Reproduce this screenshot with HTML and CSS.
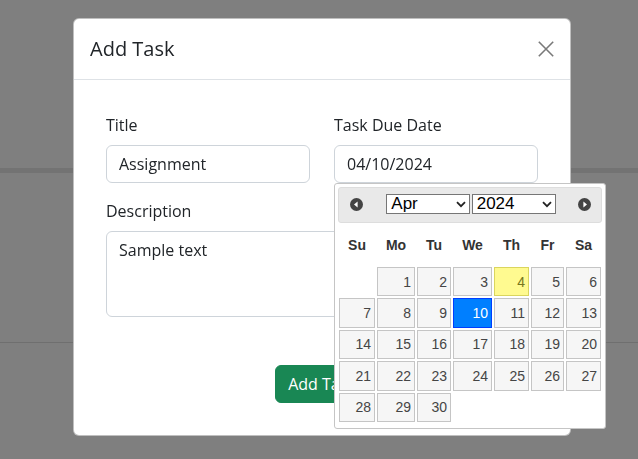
FILE: index.html
```html
<!DOCTYPE html>
<html lang="en">
<head>
<meta charset="utf-8">
<title>Add Task</title>
<link rel="stylesheet" href="styles.css">
</head>
<body>
<div class="page">
  <div class="page-top"></div>
  <div class="page-mid"></div>
</div>
<div class="backdrop"></div>

<div class="modal">
  <div class="modal-header">
    <h5 class="modal-title">Add Task</h5>
    <button class="btn-close" type="button" aria-label="Close">
      <svg width="16" height="16" viewBox="0 0 16 16"><path d="M0.8 0.8 L15.2 15.2 M15.2 0.8 L0.8 15.2" stroke="#000" stroke-width="1.6" fill="none"/></svg>
    </button>
  </div>
  <div class="modal-body">
    <div class="row">
      <div class="col">
        <label class="form-label">Title</label>
        <input class="form-control" type="text" value="Assignment">
      </div>
      <div class="col">
        <label class="form-label">Task Due Date</label>
        <input class="form-control" type="text" value="04/10/2024">
      </div>
    </div>
    <div class="field">
      <label class="form-label">Description</label>
      <textarea class="form-control textarea" rows="3">Sample text</textarea>
    </div>
    <div class="actions">
      <button class="btn-success" type="button">Add Task</button>
    </div>
  </div>
</div>

<div class="datepicker">
  <div class="dp-header">
    <span class="dp-nav">
      <svg width="13" height="13" viewBox="0 0 13 13"><circle cx="6.5" cy="6.5" r="6.5" fill="#444"/><path d="M4 6.5 L7.6 3.6 L7.6 9.4 Z" fill="#fff"/></svg>
    </span>
    <div class="dp-selects">
      <div class="dp-select"><span>Apr</span><svg width="10" height="7" viewBox="0 0 10 7"><path d="M1 1.2 L5 5.2 L9 1.2" stroke="#222" stroke-width="1.8" fill="none"/></svg></div>
      <div class="dp-select"><span>2024</span><svg width="10" height="7" viewBox="0 0 10 7"><path d="M1 1.2 L5 5.2 L9 1.2" stroke="#222" stroke-width="1.8" fill="none"/></svg></div>
    </div>
    <span class="dp-nav dp-next">
      <svg width="13" height="13" viewBox="0 0 13 13"><circle cx="6.5" cy="6.5" r="6.5" fill="#444"/><path d="M9 6.5 L5.4 3.6 L5.4 9.4 Z" fill="#fff"/></svg>
    </span>
  </div>
  <div class="dp-grid">
    <div class="dn">Su</div><div class="dn">Mo</div><div class="dn">Tu</div><div class="dn">We</div><div class="dn">Th</div><div class="dn">Fr</div><div class="dn">Sa</div>
    <div class="empty"></div>
    <div class="cell">1</div><div class="cell">2</div><div class="cell">3</div><div class="cell today">4</div><div class="cell">5</div><div class="cell">6</div>
    <div class="cell">7</div><div class="cell">8</div><div class="cell">9</div><div class="cell active">10</div><div class="cell">11</div><div class="cell">12</div><div class="cell">13</div>
    <div class="cell">14</div><div class="cell">15</div><div class="cell">16</div><div class="cell">17</div><div class="cell">18</div><div class="cell">19</div><div class="cell">20</div>
    <div class="cell">21</div><div class="cell">22</div><div class="cell">23</div><div class="cell">24</div><div class="cell">25</div><div class="cell">26</div><div class="cell">27</div>
    <div class="cell">28</div><div class="cell">29</div><div class="cell">30</div>
  </div>
</div>
</body>
</html>
```

FILE: styles.css
```css
* { box-sizing: border-box; }
html, body { margin: 0; padding: 0; }
body {
  width: 638px;
  height: 459px;
  overflow: hidden;
  background: #fff;
  font-family: "Open Sans", "Liberation Sans", sans-serif;
  color: #212529;
}

.page { width: 100%; height: 459px; }
.page-top { height: 173px; border-bottom: 5px solid #e6e6e6; }
.page-mid { height: 170px; border-bottom: 1px solid #dedede; }

.backdrop {
  position: fixed;
  inset: 0;
  background: rgba(0, 0, 0, 0.5);
}

.modal {
  position: absolute;
  left: 73px;
  top: 18px;
  width: 498px;
  background: #fff;
  border: 1px solid rgba(0, 0, 0, 0.25);
  border-radius: 6px;
}

.modal-header {
  display: flex;
  align-items: center;
  justify-content: space-between;
  padding: 15px 16px 16px 16px;
  border-bottom: 1px solid #dee2e6;
}
.modal-title {
  margin: 0;
  font-size: 20px;
  font-weight: 400;
  line-height: 29px;
  color: #212529;
}
.btn-close {
  border: 0;
  background: transparent;
  padding: 0;
  margin: 0;
  width: 16px;
  height: 16px;
  display: flex;
  align-items: center;
  justify-content: center;
  opacity: 0.52;
}

.modal-body { padding: 33px 32px 32px 32px; }

.row { display: flex; gap: 24px; }
.col { flex: 1; display: flex; flex-direction: column; }

.form-label {
  display: block;
  font-size: 16px;
  line-height: 24px;
  margin-bottom: 8px;
}
.form-control {
  display: block;
  width: 100%;
  height: 38px;
  padding: 6px 12px;
  font-family: "Open Sans", "Liberation Sans", sans-serif;
  font-size: 16px;
  line-height: 24px;
  color: #212529;
  background: #fff;
  border: 1px solid #ced4da;
  border-radius: 6px;
  outline: none;
}
.field { margin-top: 16px; display: flex; flex-direction: column; }
.textarea { height: 86px; resize: none; }

.actions { display: flex; justify-content: center; margin-top: 48px; }
.btn-success {
  font-family: "Open Sans", "Liberation Sans", sans-serif;
  font-size: 16px;
  line-height: 24px;
  padding: 6px 12px;
  color: #fff;
  background: #198754;
  border: 1px solid #198754;
  border-radius: 6px;
}

/* jQuery UI style datepicker */
.datepicker {
  position: absolute;
  left: 334px;
  top: 183px;
  width: 272px;
  padding: 3px 3px 5px 3px;
  background: #fff;
  border: 1px solid #c5c5c5;
  border-radius: 3px;
  font-family: "Liberation Sans", Arial, sans-serif;
}
.dp-header {
  display: flex;
  align-items: flex-start;
  height: 36.4px;
  padding: 6px 0 0 11px;
  background: #e9e9e9;
  border: 1px solid #dddddd;
  border-radius: 3px;
}
.dp-nav { display: flex; margin-top: 4px; width: 13px; height: 13px; }
.dp-selects { display: flex; gap: 1.4px; margin-left: 23.3px; }
.dp-next { margin-left: 22.8px; }
.dp-select {
  width: 84px;
  height: 20px;
  display: flex;
  align-items: center;
  justify-content: space-between;
  padding: 0 3px 0 4px;
  background: #fff;
  border: 1px solid #767676;
  font-size: 17px;
  line-height: 18px;
  color: #000;
}

.dp-grid {
  display: grid;
  grid-template-columns: 38px 40px 36px 41px 37px 35px 37px;
  grid-template-rows: 42.6px;
  grid-auto-rows: 31.4px;
}
.dn {
  display: flex;
  align-items: center;
  justify-content: center;
  font-size: 14px;
  font-weight: bold;
  color: #333;
}
.cell {
  margin: 1px;
  display: flex;
  align-items: center;
  justify-content: flex-end;
  padding-right: 3px;
  font-size: 14px;
  color: #454545;
  background: #f6f6f6;
  border: 1px solid #c5c5c5;
}
.cell.today { background: #fffa90; border-color: #dad55e; color: #777620; }
.cell.active { background: #007fff; border-color: #003eff; color: #fff; }
```
